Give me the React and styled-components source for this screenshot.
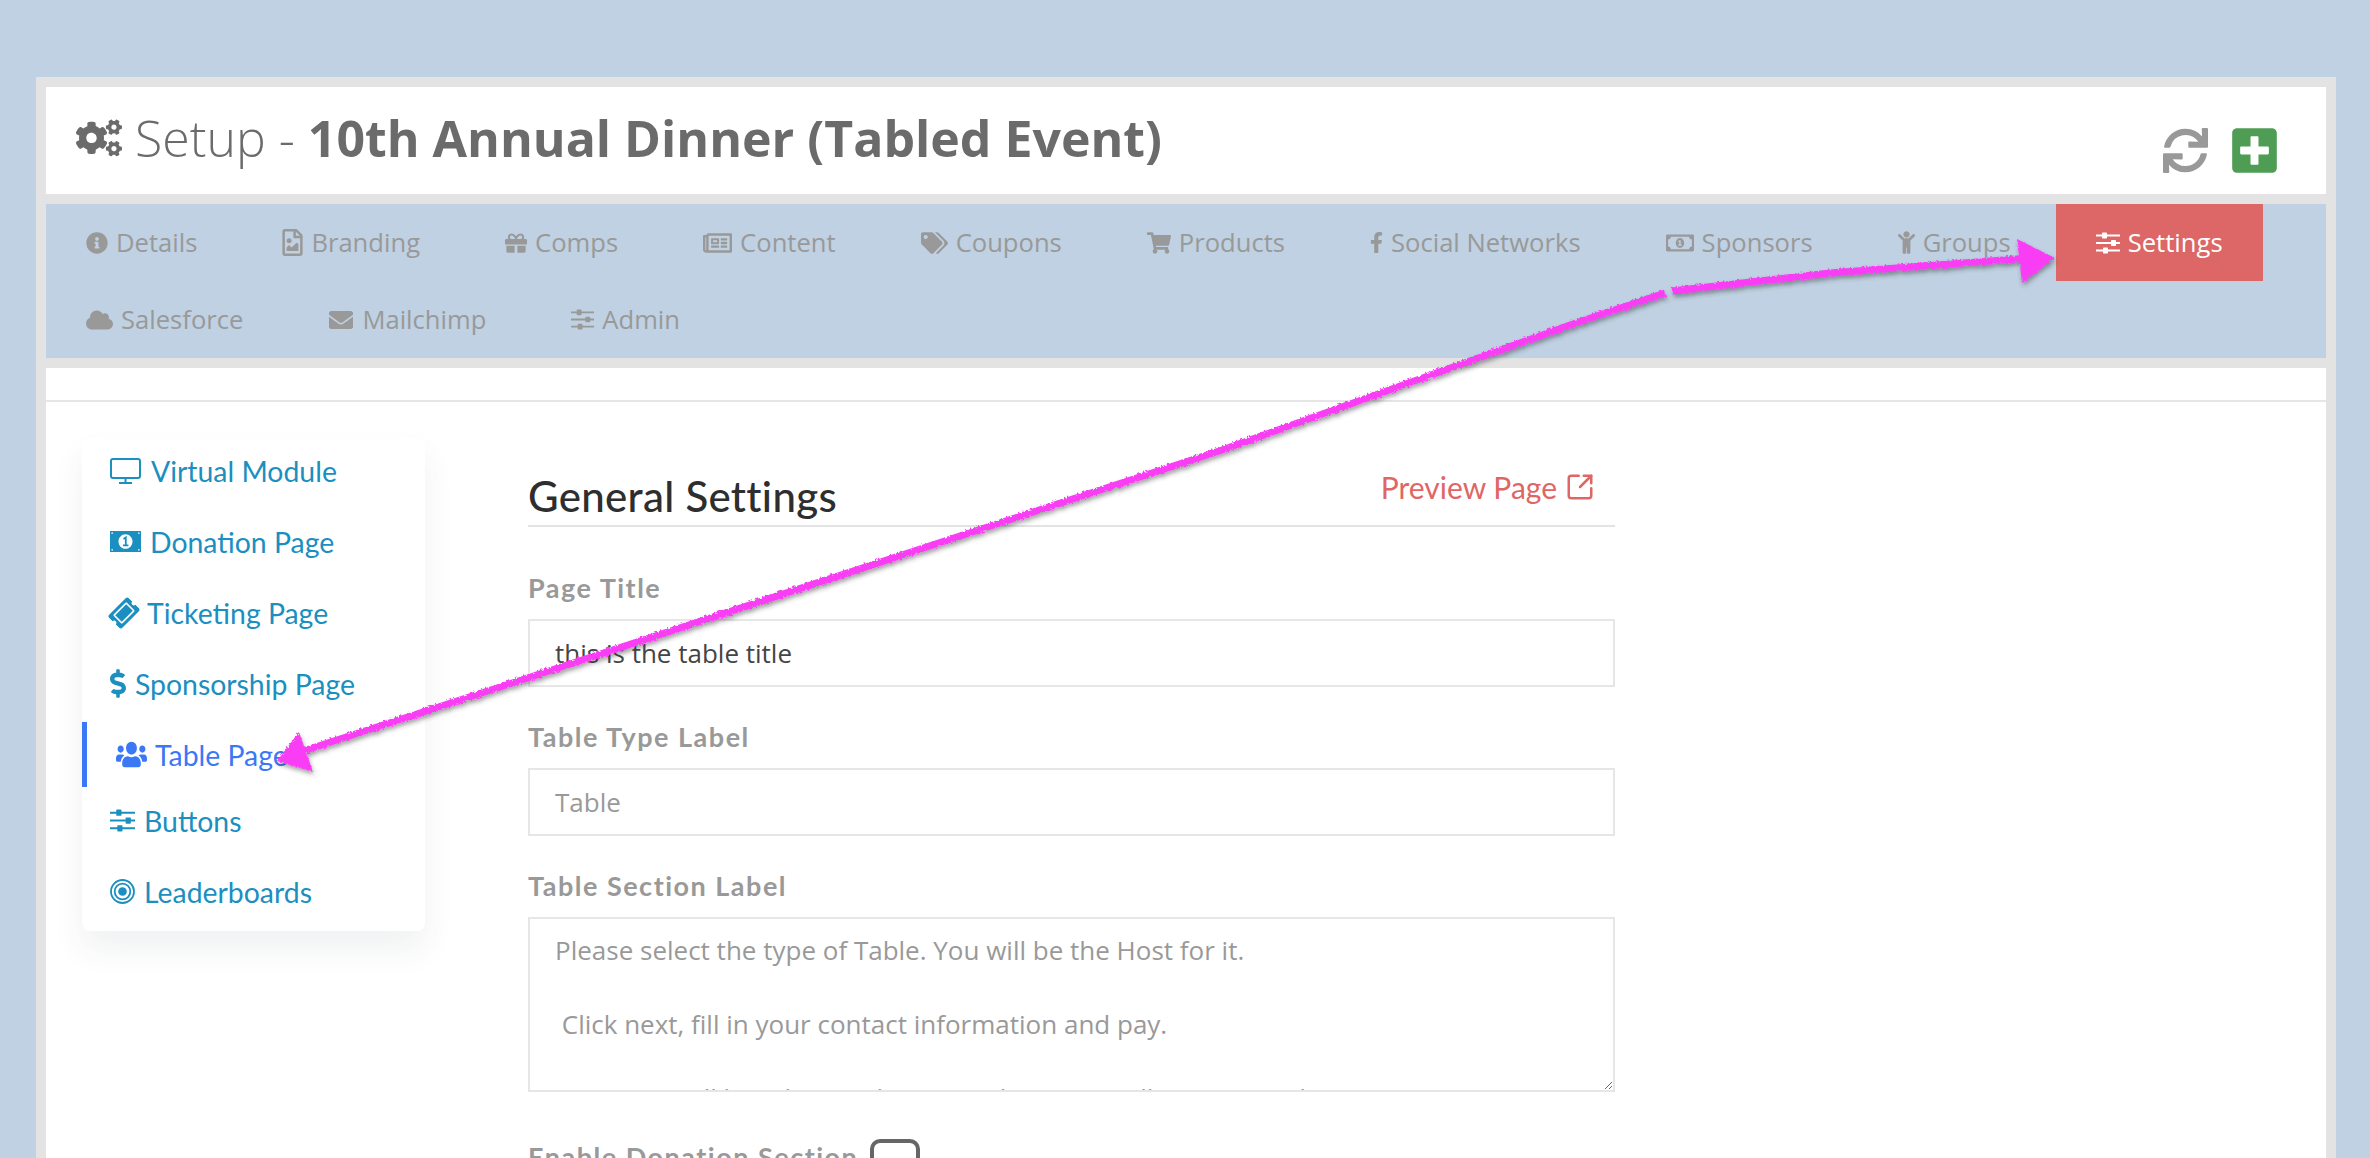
import React from "react";
import styled, { createGlobalStyle } from "styled-components";
import {
  FaCogs, FaSync, FaPlusSquare, FaInfoCircle, FaRegFileImage, FaGift, FaRegNewspaper, FaTags,
  FaShoppingCart, FaFacebookF, FaRegMoneyBillAlt, FaChild, FaCloud,
  FaEnvelope, FaTicketAlt, FaDollarSign, FaUsers,
} from "react-icons/fa";
import { SquareArrowOutUpRight } from "lucide-react";

const Global = createGlobalStyle`
  html, body { margin: 0; height: 1158px; overflow: hidden; background: #bfd1e2; }
  * { box-sizing: border-box; }
  #root { font-family: "Open Sans", "Liberation Sans", sans-serif; }
`;

const Page = styled.div`
  position: relative;
  height: 1158px;
  padding: 77px 34px 0 36px;
  overflow: hidden;
`;
const Frame = styled.div`
  background: #e3e3e3;
  padding: 10px 10px 0;
  height: 1081px;
  display: flex;
  flex-direction: column;
`;
const Header = styled.header`
  background: #fff;
  height: 107px;
  display: flex;
  justify-content: space-between;
  padding: 0 49px 0 30px;
`;
const Title = styled.h1`
  margin: 16px 0 0;
  display: flex;
  align-items: center;
  height: 70px;
  font-size: 50px;
  font-weight: 300;
  color: #6b6b6b;
  white-space: pre;
  svg { margin-right: 13px; flex: none; }
  b { font-weight: 700; }
`;
const Actions = styled.div`
  display: flex;
  gap: 24px;
  padding-top: 41px;
`;
const Nav = styled.nav`
  margin-top: 10px;
  background: #bfd1e2;
  height: 154px;
  display: flex;
  flex-wrap: wrap;
  align-content: flex-start;
  column-gap: 5px;
`;
const Tab = styled.a`
  height: 77px;
  padding: 0 40px;
  display: flex;
  align-items: center;
  gap: 8px;
  font-size: 25.6px;
  color: ${(p) => (p.$active ? "#fff" : "#999")};
  background: ${(p) => (p.$active ? "#dd6666" : "transparent")};
`;
const Glyph = styled.span`
  flex: none;
  display: flex;
  width: ${(p) => p.$w}px;
  height: ${(p) => p.$h}px;
  svg { width: 100%; height: 100%; }
`;
const Content = styled.main`
  margin-top: 10px;
  flex: 1;
  background: #fff;
  min-height: 0;
`;
const Divider = styled.div`
  height: 34px;
  border-bottom: 2px solid #e6e6e6;
`;
const Body = styled.div`
  display: flex;
  align-items: flex-start;
  gap: 103px;
  padding: 36px 0 0 36px;
`;
const Side = styled.ul`
  list-style: none;
  margin: 0;
  padding: 0 0 7px;
  width: 343px;
  flex: none;
  background: #fff;
  border-radius: 8px;
  box-shadow: 0 18px 32px rgba(40, 50, 70, 0.07);
  font-family: "Lato", "Open Sans", sans-serif;
`;
const SideItem = styled.li`
  height: 65px;
  margin-bottom: ${(p) => (p.$active ? "1px" : "6px")};
  padding-left: ${(p) => (p.$active ? "29px" : "28px")};
  border-left: ${(p) => (p.$active ? "5px solid #3b78f5" : "none")};
  display: flex;
  align-items: center;
  gap: ${(p) => (p.$active ? "8px" : "9px")};
  font-size: 28.4px;
  color: ${(p) => (p.$active ? "#3b78f5" : "#1a8fc0")};
  &:last-child { margin-bottom: 0; }
`;
const Ticket = styled(FaTicketAlt)`
  transform: rotate(-45deg);
`;
const Main = styled.section`
  width: 1087px;
  flex: none;
`;
const Head = styled.div`
  height: 89px;
  border-bottom: 2px solid #e3e3e3;
  display: flex;
  justify-content: space-between;
  font-family: "Lato", "Open Sans", sans-serif;
  margin-bottom: 43px;
`;
const H2 = styled.h2`
  margin: 0;
  align-self: flex-end;
  padding-bottom: 3px;
  font-size: 42px;
  line-height: 52px;
  font-weight: 500;
  letter-spacing: 0.3px;
  color: #2e2e2e;
`;
const Preview = styled.a`
  margin: 29px 20px 0 0;
  height: 40px;
  display: flex;
  align-items: center;
  gap: 8px;
  font-size: 30px;
  color: #e06666;
`;
const Label = styled.label`
  display: block;
  height: 36px;
  line-height: 36px;
  margin-bottom: 13px;
  font-size: 27px;
  font-weight: 700;
  letter-spacing: 1.5px;
  color: #999;
  font-family: "Lato", "Open Sans", sans-serif;
`;
const Input = styled.input`
  display: block;
  width: 100%;
  height: 68px;
  margin-bottom: 32px;
  padding: 0 25px;
  border: 2px solid #e6e6e6;
  background: #fff;
  outline: none;
  font: 26px "Open Sans", sans-serif;
  color: ${(p) => (p.$muted ? "#999" : "#444")};
`;
const Area = styled.textarea`
  display: block;
  width: 100%;
  height: 175px;
  margin-bottom: 47px;
  padding: 13px 25px 0;
  border: 2px solid #e6e6e6;
  background: #fff;
  outline: none;
  overflow: hidden;
  resize: vertical;
  font: 26px/37px "Open Sans", sans-serif;
  color: #999;
`;
const Toggle = styled.div`
  display: flex;
  align-items: flex-start;
  gap: 12px;
`;
const Check = styled.span`
  width: 50px;
  height: 50px;
  border: 4px solid #666;
  border-radius: 10px;
  background: #fff;
`;
const Arrow = styled.svg`
  position: absolute;
  inset: 0;
  pointer-events: none;
`;

const Sliders = () => (
  <svg viewBox="0 0 24 22" fill="currentColor">
    <path d="M0 2.5h24v2H0zM0 10h24v2H0zM0 17.5h24v2H0z" />
    <rect x="6" y="0.5" width="5" height="6" rx="0.8" />
    <rect x="15" y="8" width="5" height="6" rx="0.8" />
    <rect x="7" y="15.5" width="5" height="6" rx="0.8" />
  </svg>
);

const Monitor = () => (
  <svg viewBox="0 0 32 26" fill="none" stroke="currentColor" strokeWidth="2">
    <rect x="1" y="1" width="29" height="19" rx="2" />
    <path d="M15.5 20v4M9 25h13" />
  </svg>
);

const Bill = () => (
  <svg viewBox="0 0 31 21">
    <path
      fill="currentColor"
      fillRule="evenodd"
      d="M0 0h31v21H0zM3 1.5H1.5V3h.5a1 1 0 0 0 1-1zM28 1.5v.5a1 1 0 0 0 1 1h.5V1.5zM1.5 18v1.5H3V19a1 1 0 0 0-1-1zM29 18a1 1 0 0 0-1 1v.5h1.5V18zM15.5 3.2c-4 0-7 3.3-7 7.3s3 7.3 7 7.3 7-3.3 7-7.3-3-7.3-7-7.3z"
    />
    <path fill="none" stroke="currentColor" strokeWidth="1.8" d="M13.5 8l2.3-1.5V14M13 14.4h5.4" />
  </svg>
);

const Target = () => (
  <svg viewBox="0 0 25 25" fill="none" stroke="currentColor" strokeWidth="1.8">
    <circle cx="12.5" cy="12.5" r="11.5" />
    <circle cx="12.5" cy="12.5" r="7.8" />
    <circle cx="12.5" cy="12.5" r="4.3" fill="currentColor" stroke="none" />
  </svg>
);

const tabs = [
  [FaInfoCircle, 22, 22, "Details"],
  [FaRegFileImage, 21, 27, "Branding"],
  [FaGift, 22, 22, "Comps"],
  [FaRegNewspaper, 29, 26, "Content"],
  [FaTags, 27, 24, "Coupons"],
  [FaShoppingCart, 24, 22, "Products"],
  [FaFacebookF, 13, 25, "Social Networks"],
  [FaRegMoneyBillAlt, 28, 24, "Sponsors"],
  [FaChild, 17, 23, "Groups"],
  [Sliders, 24, 22, "Settings", true],
  [FaCloud, 27, 24, "Salesforce"],
  [FaEnvelope, 26, 24, "Mailchimp"],
  [Sliders, 23, 21, "Admin"],
];

const side = [
  [<Monitor />, 32, 26, "Virtual Module"],
  [<Bill />, 31, 21, "Donation Page"],
  [<Ticket />, 28, 28, "Ticketing Page"],
  [<FaDollarSign />, 16, 29, "Sponsorship Page"],
  [<FaUsers preserveAspectRatio="none" />, 31, 29, "Table Page", true],
  [<Sliders />, 25, 23, "Buttons"],
  [<Target />, 25, 25, "Leaderboards"],
];

const note = `Please select the type of Table. You will be the Host for it.

 Click next, fill in your contact information and pay.

 Next you will be taken to the page where you will register and invite your guests.`;

export default function App() {
  return (
    <Page>
      <Global />
      <Frame>
        <Header>
          <Title>
            <FaCogs size={46} />
            {"Setup - "}
            <b>10th Annual Dinner (Tabled Event)</b>
          </Title>
          <Actions>
            <FaSync size={45} color="#999" />
            <FaPlusSquare size={51} color="#4f9d54" style={{ margin: "-3px" }} />
          </Actions>
        </Header>
        <Nav>
          {tabs.map(([Icon, w, h, label, active]) => (
            <Tab key={label} $active={active}>
              <Glyph $w={w} $h={h}>
                <Icon />
              </Glyph>
              {label}
            </Tab>
          ))}
        </Nav>
        <Content>
          <Divider />
          <Body>
            <Side>
              {side.map(([icon, w, h, label, active]) => (
                <SideItem key={label} $active={active}>
                  <Glyph $w={w} $h={h}>{icon}</Glyph>
                  {label}
                </SideItem>
              ))}
            </Side>
            <Main>
              <Head>
                <H2>General Settings</H2>
                <Preview>
                  Preview Page
                  <SquareArrowOutUpRight size={30} strokeWidth={2} />
                </Preview>
              </Head>
              <Label>Page Title</Label>
              <Input readOnly value="this is the table title" />
              <Label>Table Type Label</Label>
              <Input readOnly $muted value="Table" />
              <Label>Table Section Label</Label>
              <Area readOnly value={note} />
              <Toggle>
                <Label>Enable Donation Section</Label>
                <Check />
              </Toggle>
            </Main>
          </Body>
        </Content>
      </Frame>
      <Arrow width="2370" height="1158" viewBox="0 0 2370 1158">
        <defs>
          <filter id="rough" x="-5%" y="-5%" width="110%" height="110%">
            <feTurbulence type="fractalNoise" baseFrequency="0.4" numOctaves="2" seed="4" result="n" />
            <feDisplacementMap in="SourceGraphic" in2="n" scale="4" result="d" />
            <feDropShadow in="d" dx="1" dy="3" stdDeviation="2" floodColor="#333" floodOpacity="0.45" />
          </filter>
        </defs>
        <g filter="url(#rough)" fill="#f93ef5" stroke="#f93ef5" strokeLinejoin="round">
          <path fill="none" strokeWidth="7" d="M1672 291 L1830 273 L2030 258" />
          <path stroke="none" d="M2055 258 L2017 239 L2022 283 Z" />
          <path fill="none" strokeWidth="7" d="M1665 293 L1570 325 L1222 450 L500 687 L300 752" />
          <path stroke="none" d="M277 761 L299 732 L313 772 Z" />
        </g>
      </Arrow>
    </Page>
  );
}
